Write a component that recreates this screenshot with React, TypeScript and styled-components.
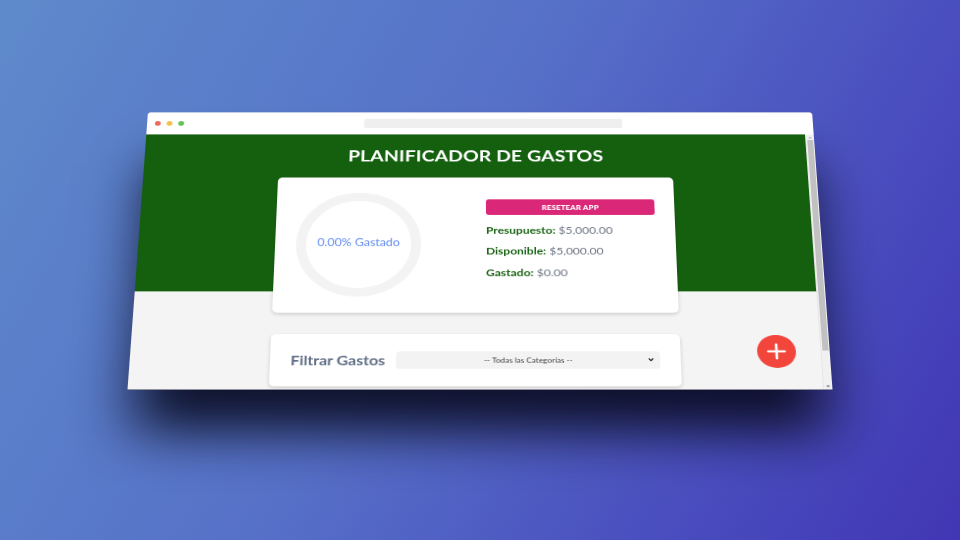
import React from 'react'
import styled, { createGlobalStyle } from 'styled-components'

const GlobalStyle = createGlobalStyle`
  html, body {
    margin: 0;
    padding: 0;
    width: 960px;
    height: 540px;
    overflow: hidden;
  }
  body {
    font-family: Lato, "Open Sans", "Liberation Sans", sans-serif;
  }
  * { box-sizing: border-box; }
`

const Stage = styled.div`
  width: 960px;
  height: 540px;
  display: flex;
  justify-content: center;
  padding-top: 80px;
  background: linear-gradient(120deg, #5e8acb 0%, #5670c8 45%, #4a4fbf 75%, #4136b4 100%);
`

const BrowserFrame = styled.div`
  width: 684px;
  height: 334px;
  display: flex;
  flex-direction: column;
  background: #f4f4f4;
  border-radius: 4px 4px 0 0;
  overflow: hidden;
  transform: perspective(3117px) rotateX(33.9deg);
  transform-origin: center center;
  box-shadow: 0 55px 55px -8px rgba(10, 12, 34, 0.95);
  border-bottom: 1px solid #9a9aa6;
`

const ChromeBar = styled.div`
  height: 28px;
  flex: none;
  display: flex;
  align-items: center;
  padding-left: 8px;
  background: #ffffff;
`

const Dots = styled.div`
  display: flex;
  gap: 6px;
`

const Dot = styled.span<{ $color: string }>`
  width: 6px;
  height: 6px;
  border-radius: 50%;
  background: ${p => p.$color};
`

const UrlBar = styled.div`
  width: 265px;
  height: 12px;
  margin-left: 185px;
  border-radius: 3px;
  background: #efefef;
`

const Viewport = styled.div`
  flex: 1;
  display: flex;
  min-height: 0;
`

const Page = styled.div`
  flex: 1;
  position: relative;
  background: #f4f4f4;
`

const Header = styled.header`
  height: 192px;
  display: flex;
  flex-direction: column;
  align-items: center;
  padding-top: 15px;
  background: #15600f;
`

const Title = styled.h1`
  margin: 0;
  font-size: 19.8px;
  line-height: 22px;
  font-weight: 700;
  color: #ffffff;
  letter-spacing: 0.1px;
`

const BudgetCard = styled.div`
  width: 401px;
  height: 163px;
  flex: none;
  margin-top: 17px;
  display: flex;
  align-items: center;
  padding: 0 20px 0 21px;
  background: #ffffff;
  border-radius: 5px;
  box-shadow: 0 2px 4px rgba(0, 0, 0, 0.16);
  position: relative;
  z-index: 1;
`

const Ring = styled.div`
  width: 125px;
  height: 125px;
  flex: none;
  display: flex;
  align-items: center;
  justify-content: center;
  padding-bottom: 4px;
  border-radius: 50%;
  border: 10px solid #f3f3f3;
  font-size: 12.4px;
  color: #648ff0;
`

const Stats = styled.div`
  width: 170px;
  margin-left: auto;
  align-self: flex-start;
  margin-top: 27px;
  display: flex;
  flex-direction: column;
  gap: 10.5px;
`

const ResetButton = styled.button`
  height: 19px;
  border: none;
  border-radius: 3px;
  background: #db2777;
  color: #ffffff;
  font-family: Lato, "Liberation Sans", sans-serif;
  font-size: 8px;
  font-weight: 900;
  text-transform: uppercase;
  letter-spacing: 0.1px;
`

const StatLine = styled.p`
  margin: 0;
  font-size: 12px;
  line-height: 15px;
  color: #6b7280;

  span {
    font-weight: 700;
    color: #1b6516;
  }
`

const FilterCard = styled.div`
  width: 401px;
  margin: 50px auto 0;
  display: flex;
  align-items: center;
  gap: 11px;
  padding: 20px;
  background: #ffffff;
  border-radius: 5px;
  box-shadow: 0 2px 4px rgba(0, 0, 0, 0.16);
`

const FilterLabel = styled.label`
  font-size: 15.5px;
  font-weight: 700;
  color: #5e6d84;
  white-space: nowrap;
`

const SelectBox = styled.div`
  flex: 1;
  height: 20px;
  position: relative;
  display: flex;
  align-items: center;
  justify-content: center;
  border-radius: 4px;
  background: #f3f3f3;
  font-size: 8px;
  color: #3a3a3a;

  svg {
    position: absolute;
    right: 6px;
    top: 7px;
  }
`

const Fab = styled.button`
  position: absolute;
  right: 24px;
  top: 243px;
  width: 38px;
  height: 38px;
  border: none;
  border-radius: 50%;
  background: #f2453b;
  display: flex;
  align-items: center;
  justify-content: center;
  padding: 0;
`

const Scrollbar = styled.div`
  width: 9px;
  flex: none;
  display: flex;
  flex-direction: column;
  align-items: center;
  background: #f1f1f1;
  border-left: 1px solid #e6e6e6;
`

const ScrollArrow = styled.div<{ $down?: boolean }>`
  height: 7px;
  flex: none;
  display: flex;
  align-items: center;
  justify-content: center;

  &::before {
    content: "";
    border-left: 2px solid transparent;
    border-right: 2px solid transparent;
    ${p => (p.$down ? 'border-top: 2px solid #6b6b6b;' : 'border-bottom: 2px solid #a3a3a3;')}
  }
`

const Thumb = styled.div`
  width: 6px;
  height: 254px;
  background: #c1c1c1;
`

const Spacer = styled.div`
  flex: 1;
`

export default function App() {
  return (
    <Stage>
      <GlobalStyle />
      <BrowserFrame>
        <ChromeBar>
          <Dots>
            <Dot $color="#ec6a5e" />
            <Dot $color="#f4bf4f" />
            <Dot $color="#61c554" />
          </Dots>
          <UrlBar />
        </ChromeBar>
        <Viewport>
          <Page>
            <Header>
              <Title>PLANIFICADOR DE GASTOS</Title>
              <BudgetCard>
                <Ring>0.00% Gastado</Ring>
                <Stats>
                  <ResetButton>Resetear App</ResetButton>
                  <StatLine><span>Presupuesto:</span> $5,000.00</StatLine>
                  <StatLine><span>Disponible:</span> $5,000.00</StatLine>
                  <StatLine><span>Gastado:</span> $0.00</StatLine>
                </Stats>
              </BudgetCard>
            </Header>
            <FilterCard>
              <FilterLabel>Filtrar Gastos</FilterLabel>
              <SelectBox>
                -- Todas las Categorías --
                <svg width="6" height="5" viewBox="0 0 6 5">
                  <path d="M0.8 1.2 L3 3.6 L5.2 1.2" stroke="#222" strokeWidth="1.3" fill="none" />
                </svg>
              </SelectBox>
            </FilterCard>
            <Fab aria-label="Nuevo gasto">
              <svg width="20" height="20" viewBox="0 0 20 20">
                <path d="M10 2 V18 M2 10 H18" stroke="#fff" strokeWidth="2.6" strokeLinecap="round" />
              </svg>
            </Fab>
          </Page>
          <Scrollbar>
            <ScrollArrow />
            <Thumb />
            <Spacer />
            <ScrollArrow $down />
          </Scrollbar>
        </Viewport>
      </BrowserFrame>
    </Stage>
  )
}
